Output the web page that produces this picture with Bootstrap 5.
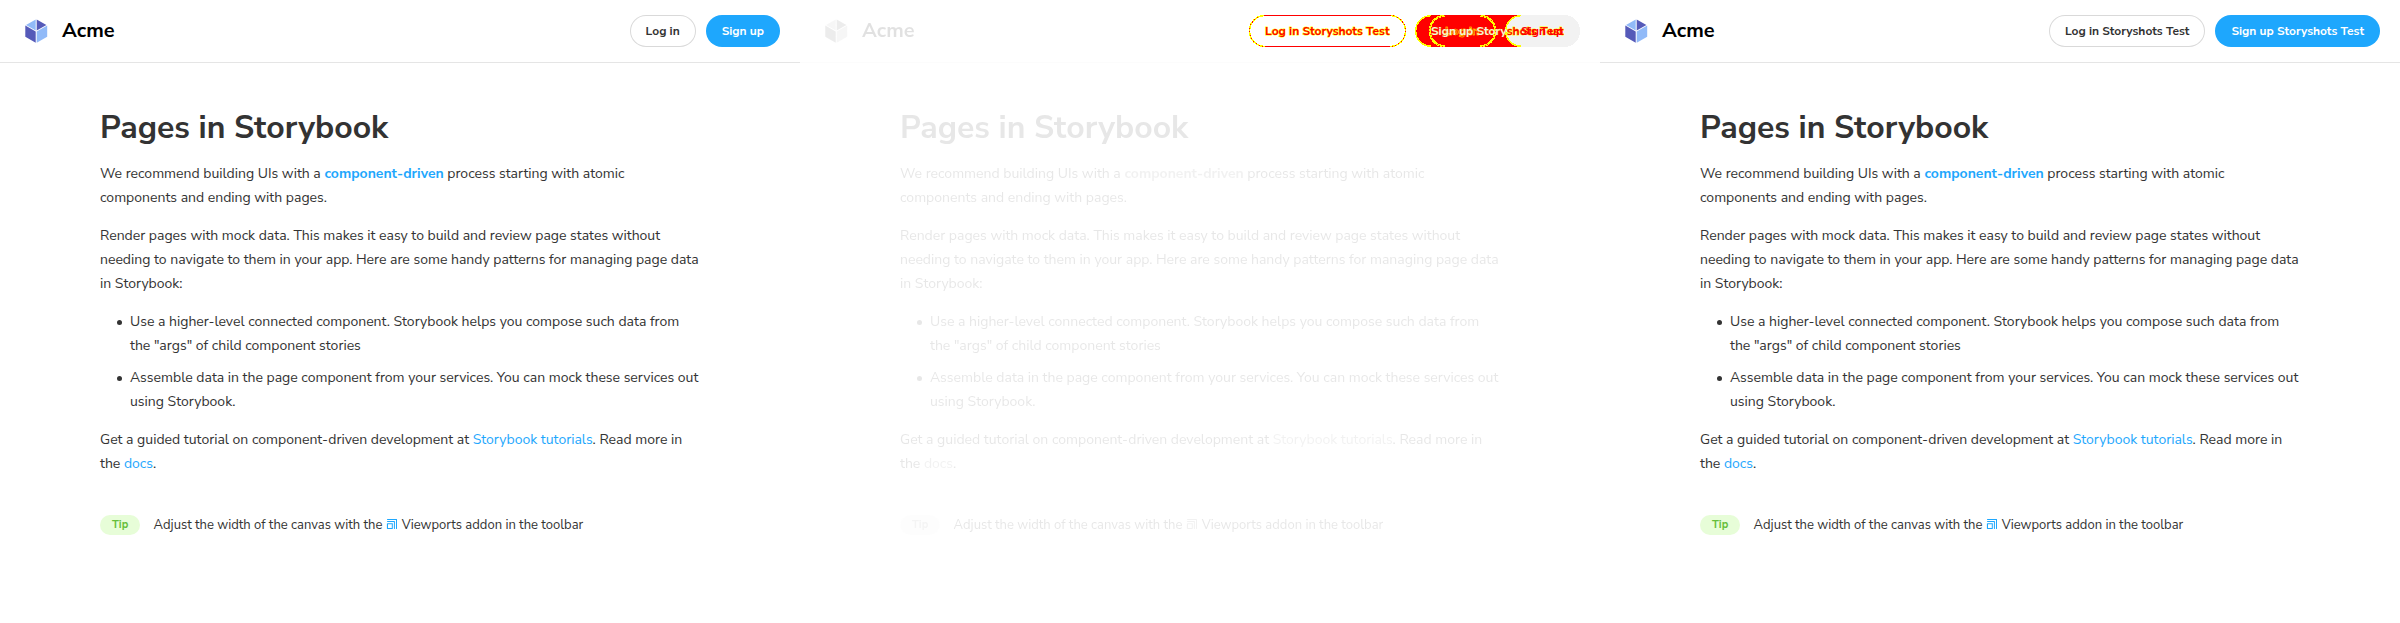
<!DOCTYPE html>
<html lang="en">
<head>
<meta charset="utf-8">
<title>Pages in Storybook</title>
<link href="https://cdn.jsdelivr.net/npm/bootstrap@5.3.0/dist/css/bootstrap.min.css" rel="stylesheet">
<style>
body{font-family:"Nunito Sans",Nunito,Lato,sans-serif;font-size:14px;line-height:24px;color:#333;background:#fff;height:623px;overflow:hidden}
.shot{width:800px}
.topbar{padding:15px 20px;height:63px;border-bottom:1px solid rgba(0,0,0,.1)}
.actions{gap:10px}
.brand-name{font-size:20px;font-weight:700;line-height:20px;color:#000;margin:6px 0 6px 10px}
.pill-btn{font-family:inherit;font-size:12px;font-weight:700;line-height:12px;padding:10px 16px;border:0;border-radius:48px;height:32px;color:#333;background:transparent;box-shadow:rgba(0,0,0,.15) 0 0 0 1px inset}
.pill-main{color:#fff;background:#1ea7fd;box-shadow:none}
.story{width:600px;padding-top:49px}
.story h2{font-size:32px;font-weight:700;line-height:32px;margin:0 0 18px}
.story p{margin:0 0 14px}
.story ul{list-style:none;padding-left:30px;margin:0 0 14px}
.story li{position:relative}
.story li::before{content:"";position:absolute;left:-13px;top:10px;width:5px;height:5px;border-radius:50%;background:#333}
.story li+li{margin-top:8px}
.story a{color:#1ea7fd;text-decoration:none}
.tip-row{font-size:13px;line-height:20px;margin-top:39px}
.tip-pill{font-size:11px;line-height:12px;font-weight:700;color:#66bf3c;background:#e7fdd8;border-radius:16px;padding:4px 12px;margin-right:10px}
.tip-row svg{width:12px;height:12px;margin:3px 4px 0 0;vertical-align:top}
.faded .brand,.faded .story{filter:grayscale(1);opacity:.115}
.faded .topbar{border-bottom-color:rgba(0,0,0,.012)}
.changes text{font-size:12px;font-weight:700}
.halo{paint-order:stroke;stroke:#ff0;stroke-width:1px;fill:#f00}
</style>
</head>
<body>
<div class="d-flex" id="shots"></div>

<template id="page">
<article class="shot flex-shrink-0">
<header class="topbar d-flex justify-content-between align-items-start">
<div class="brand d-flex">
<svg width="32" height="32" viewBox="0 0 32 32"><path d="M5.3 10.6l10.4 6v11.1l-10.4-6v-11zm11.4-6.2l9.7 5.5-9.7 5.6V4.4z" fill="#555AB9"/><path d="M27.2 10.6v11.2l-10.5 6V16.5l10.5-6zM15.7 4.4v11L6 10l9.7-5.5z" fill="#91BAF8"/></svg>
<h1 class="brand-name">Acme</h1>
</div>
<div class="actions d-flex"></div>
</header>
<section class="story mx-auto">
<h2>Pages in Storybook</h2>
<p>We recommend building UIs with a <a href="#"><strong>component-driven</strong></a> process starting with atomic components and ending with pages.</p>
<p>Render pages with mock data. This makes it easy to build and review page states without needing to navigate to them in your app. Here are some handy patterns for managing page data in Storybook:</p>
<ul>
<li>Use a higher-level connected component. Storybook helps you compose such data from the "args" of child component stories</li>
<li>Assemble data in the page component from your services. You can mock these services out using Storybook.</li>
</ul>
<p>Get a guided tutorial on component-driven development at <a href="#">Storybook tutorials</a>. Read more in the <a href="#">docs</a>.</p>
<div class="tip-row"><span class="tip-pill d-inline-block align-top">Tip</span> Adjust the width of the canvas with the <svg viewBox="0 0 12 12"><path d="M1.5 5.2h4.8c.3 0 .5.2.5.4v5.1c-.1.2-.3.3-.4.3H1.4a.5.5 0 01-.5-.4V5.7c0-.3.2-.5.5-.5zm0-2.1h6.9c.3 0 .5.2.5.4v7a.5.5 0 01-1 0V4H1.5a.5.5 0 010-1zm0-2.1h9c.3 0 .5.2.5.4v9.1a.5.5 0 01-1 0V2H1.5a.5.5 0 010-1zm4.3 5.2H2V10h3.8V6.2z" fill="#1ea7fd"/></svg>Viewports addon in the toolbar</div>
</section>
</article>
</template>

<template id="diff">
<svg class="changes" width="331" height="32" viewBox="0 0 331 32" shape-rendering="crispEdges">
<path d="M16 .5a15.5 15.5 0 000 31M141 .5a15.5 15.5 0 010 31" fill="none" stroke="#ff0" stroke-width="1.6"/>
<path d="M16 .5a15.5 15.5 0 000 31M141 .5a15.5 15.5 0 010 31" fill="none" stroke="#f00" stroke-width="1" stroke-dasharray="1 2.5"/>
<path d="M16 .5h125M16 31.5h125" stroke="#f00"/>
<text class="halo" x="16" y="20">Log in Storyshots Test</text>
<path d="M182 0h90v32h-90a16 16 0 010-32z" fill="#f00"/>
<rect x="256" width="75" height="32" rx="16" fill="#f2f2f2"/>
<path d="M182 .7a15.3 15.3 0 000 30.6M272 .7a15.3 15.3 0 000 30.6" fill="none" stroke="#ff0" stroke-width="1.5"/>
<path d="M196 .7a15.3 15.3 0 000 30.6M231 .7a15.3 15.3 0 010 30.6" fill="none" stroke="#ff0" stroke-width="2.2"/>
<path d="M196 .7a15.3 15.3 0 000 30.6M231 .7a15.3 15.3 0 010 30.6" fill="none" stroke="#f00" stroke-width=".8" stroke-dasharray="1 2"/>
<text x="196" y="20" fill="none" stroke="#ff0" stroke-width=".5">Log in</text>
<svg width="258" height="32"><text x="182" y="20" fill="#f2f2f2" stroke="#ff0" stroke-width=".2">Sign up Storyshots Test</text></svg>
<svg x="258" width="73" height="32" viewBox="258 0 73 32"><text class="halo" x="182" y="20">Sign up Storyshots Test</text></svg>
<text x="272" y="20" fill="#f00">Sign up</text>
</svg>
</template>

<script>
const buttons = (a, b) => `<button class="pill-btn">${a}</button><button class="pill-btn pill-main">${b}</button>`;
const panels = [
  {cls: 'before', actions: buttons('Log in', 'Sign up')},
  {cls: 'faded', actions: document.getElementById('diff').innerHTML},
  {cls: 'after', actions: buttons('Log in Storyshots Test', 'Sign up Storyshots Test')}
];
for (const panel of panels) {
  const page = document.getElementById('page').content.cloneNode(true);
  page.querySelector('.shot').classList.add(panel.cls);
  page.querySelector('.actions').innerHTML = panel.actions;
  document.getElementById('shots').append(page);
}
</script>
<script src="https://cdn.jsdelivr.net/npm/bootstrap@5.3.0/dist/js/bootstrap.bundle.min.js"></script>
</body>
</html>
